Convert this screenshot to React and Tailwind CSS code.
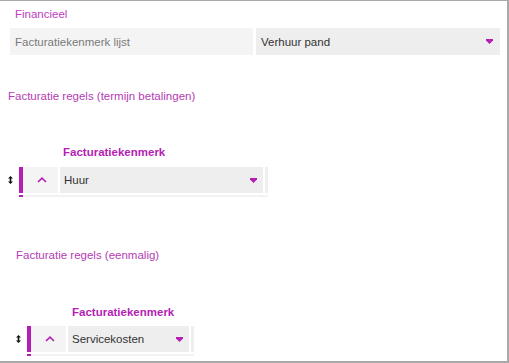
const MAG = "#b41eb4";

function Caret() {
  return (
    <svg width="7" height="5" viewBox="0 0 7 5" className="shrink-0">
      <path d="M0 0 H7 V1.5 L3.5 5 L0 1.5 Z" fill={MAG} />
    </svg>
  );
}

function Handle() {
  return (
    <svg width="5" height="8" viewBox="0 0 5 8">
      <path d="M2.5 0 L5 2.6 H3.3 V5.4 H5 L2.5 8 L0 5.4 H1.7 V2.6 H0 Z" fill="#111" />
    </svg>
  );
}

function ChevronUp() {
  return (
    <svg width="10" height="6" viewBox="0 0 10 6">
      <path d="M1 5 L5 1.2 L9 5" fill="none" stroke={MAG} strokeWidth="1.6" />
    </svg>
  );
}

function RuleRow({ value, selectWidth }) {
  return (
    <div className="flex items-start">
      <div className="w-[19px] h-[26px] flex items-center justify-center pl-[1px]">
        <Handle />
      </div>
      <div className="flex flex-col">
        <div className="flex h-[26px]">
          <div className="w-[4px] bg-[#b41eb4]" />
          <div className="w-[35px] bg-[#f4f4f4] flex items-center justify-center pl-[3px]">
            <ChevronUp />
          </div>
          <div
            className="ml-[2px] bg-[#eeeeee] flex items-center justify-between pl-[4px] pr-[6px] text-[#333]"
            style={{ width: selectWidth }}
          >
            <span>{value}</span>
            <Caret />
          </div>
          <div className="ml-[2px] w-[3px] bg-[#efefef]" />
        </div>
        <div className="flex mt-[2px] h-[2px]">
          <div className="w-[4px] bg-[#b41eb4]" />
          <div className="flex-1 bg-[#f2f2f2]" />
        </div>
      </div>
    </div>
  );
}

export default function App() {
  return (
    <div
      className="w-[509px] h-[363px] bg-white border-t border-r-2 border-b-2 border-[#a9a9a9] overflow-hidden text-[11.5px] leading-[14px]"
      style={{ fontFamily: '"Liberation Sans", Arial, sans-serif' }}
    >
      <div className="pl-[15px] pt-[6px] text-[#c03cc0]">Financieel</div>

      <div className="ml-[10px] mt-[7px] w-[490px] h-[27px] flex gap-[3px]">
        <div className="w-[243px] bg-[#f4f4f4] flex items-center pl-[5px] text-[#7a7a7a]">
          Facturatiekenmerk lijst
        </div>
        <div className="flex-1 bg-[#eeeeee] flex items-center justify-between pl-[5px] pr-[7px] text-[#333]">
          <span>Verhuur pand</span>
          <Caret />
        </div>
      </div>

      <div className="pl-[8px] mt-[34px] text-[#b43cb4]">
        Facturatie regels (termijn betalingen)
      </div>

      <div className="pl-[63px] mt-[42px] font-bold text-[#b41eb4]">Facturatiekenmerk</div>
      <div className="mt-[8px]">
        <RuleRow value="Huur" selectWidth={203} />
      </div>

      <div className="pl-[8px]">
        <div className="pl-[8px] mt-[51px] text-[#b43cb4]">Facturatie regels (eenmalig)</div>
        <div className="pl-[64px] mt-[43px] font-bold text-[#b41eb4]">Facturatiekenmerk</div>
        <div className="mt-[7px]">
          <RuleRow value="Servicekosten" selectWidth={121} />
        </div>
      </div>
    </div>
  );
}
